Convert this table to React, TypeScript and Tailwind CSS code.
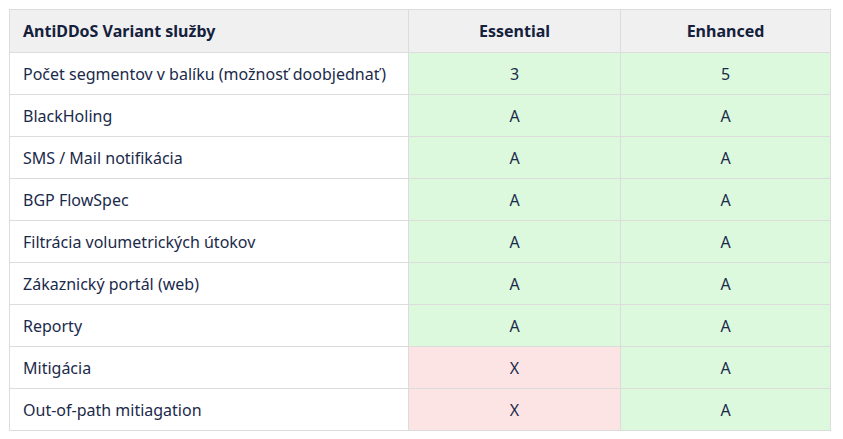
import React from 'react';

type Row = { label: string; essential: string; enhanced: string };

const rows: Row[] = [
  { label: 'Počet segmentov v balíku (možnosť doobjednať)', essential: '3', enhanced: '5' },
  { label: 'BlackHoling', essential: 'A', enhanced: 'A' },
  { label: 'SMS / Mail notifikácia', essential: 'A', enhanced: 'A' },
  { label: 'BGP FlowSpec', essential: 'A', enhanced: 'A' },
  { label: 'Filtrácia volumetrických útokov', essential: 'A', enhanced: 'A' },
  { label: 'Zákaznický portál (web)', essential: 'A', enhanced: 'A' },
  { label: 'Reporty', essential: 'A', enhanced: 'A' },
  { label: 'Mitigácia', essential: 'X', enhanced: 'A' },
  { label: 'Out-of-path mitiagation', essential: 'X', enhanced: 'A' },
];

// green for available, red for missing
const cellBg = (v: string) => (v === 'X' ? 'bg-[#fde4e4]' : 'bg-[#dcf9dd]');

export default function App() {
  return (
    <div className="min-h-screen bg-white pt-[9px] pl-[9px] font-['Noto_Sans',sans-serif]">
      <table className="w-[822px] border-collapse border border-[#dcdcdc] text-[16px] text-[#1b2a4b]">
        <thead>
          <tr className="h-[43px] bg-[#f0f0f0] text-[#14203c]">
            <th className="w-[399px] border border-[#dcdcdc] px-[13px] text-left font-bold">AntiDDoS Variant služby</th>
            <th className="w-[212px] border border-[#dcdcdc] text-center font-bold">Essential</th>
            <th className="border border-[#dcdcdc] text-center font-bold">Enhanced</th>
          </tr>
        </thead>
        <tbody>
          {rows.map((r) => (
            <tr key={r.label} className="h-[42px]">
              <td className="border border-[#dcdcdc] px-[13px]">{r.label}</td>
              <td className={`border border-[#dcdcdc] text-center ${cellBg(r.essential)}`}>{r.essential}</td>
              <td className={`border border-[#dcdcdc] text-center ${cellBg(r.enhanced)}`}>{r.enhanced}</td>
            </tr>
          ))}
        </tbody>
      </table>
    </div>
  );
}
